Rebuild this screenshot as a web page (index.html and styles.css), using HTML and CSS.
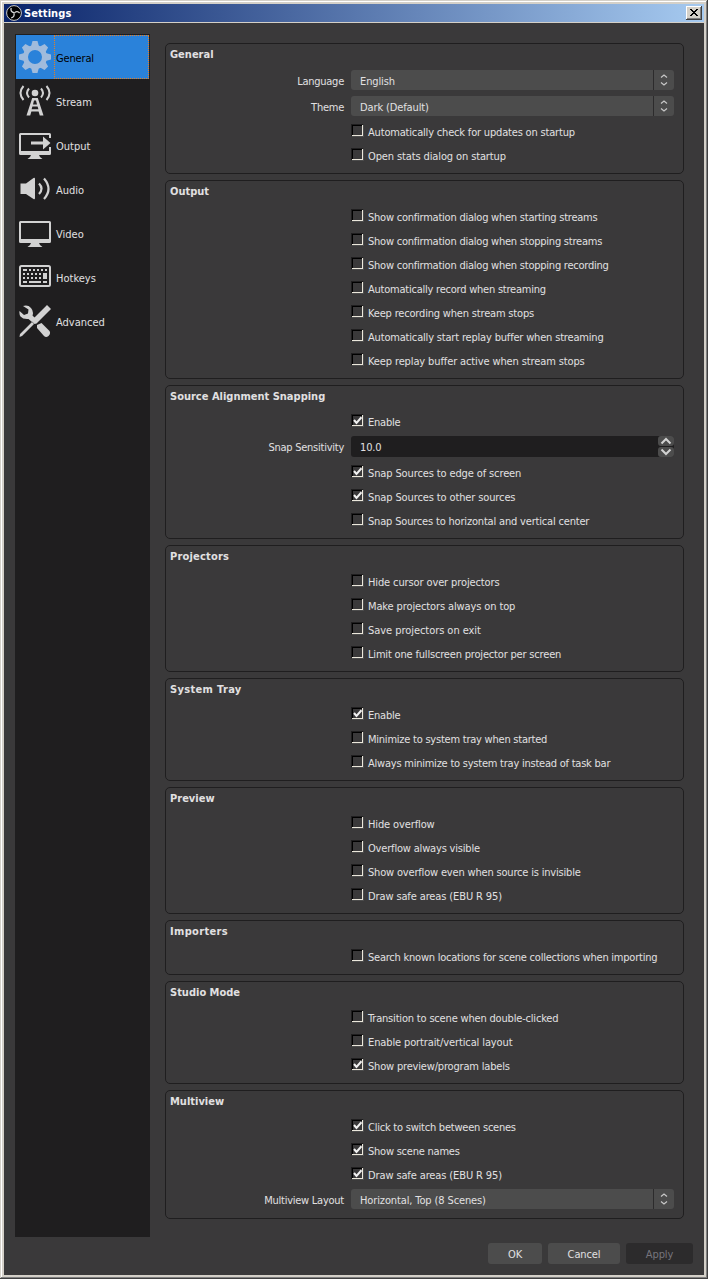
FILE: index.html
```html
<!DOCTYPE html>
<html lang="en">
<head>
<meta charset="utf-8">
<title>Settings</title>
<link rel="stylesheet" href="styles.css">
</head>
<body>
<div class="window">
  <header class="titlebar">
    <svg class="logo" viewBox="0 0 16 16"><circle cx="8" cy="8" r="7.400" fill="#000" stroke="#c8c8c8"/><g fill="none" stroke="#d8d8d8" stroke-width="1.300"><path d="M8 7.600C5.600 7.400 4.400 5.400 5.200 3"/><path d="M8.300 8.200C9.700 6.200 12 6.100 13.600 8"/><path d="M7.800 8.300C8.800 10.500 7.600 12.500 5.200 12.900"/></g></svg>
    <span class="title">Settings</span>
    <button class="close" aria-label="Close"><svg viewBox="0 0 8 7" shape-rendering="crispEdges"><path d="M0 0h2v1h1v1h2V1h1V0h2v1H7v1H6v1H5v1h1v1h1v1h1v1H6V6H5V5H3v1H2v1H0V6h1V5h1V4h1V3H2V2H1V1H0z"/></svg></button>
  </header>
  <div class="body">
    <nav class="sidebar">
      <a class="item selected"><span class="ico"><svg viewBox="0 0 32 32"><circle cx="16" cy="16" r="9.500" fill="none" stroke="#a0bbdc" stroke-width="5"/><g fill="#a0bbdc"><path id="tooth" d="M13.500 0h5l1.500 5.500h-8z"/><use href="#tooth" transform="rotate(45 16 16)"/><use href="#tooth" transform="rotate(90 16 16)"/><use href="#tooth" transform="rotate(135 16 16)"/><use href="#tooth" transform="rotate(180 16 16)"/><use href="#tooth" transform="rotate(225 16 16)"/><use href="#tooth" transform="rotate(270 16 16)"/><use href="#tooth" transform="rotate(315 16 16)"/></g></svg></span><span class="name">General</span></a>
      <a class="item"><span class="ico"><svg viewBox="0 0 32 32"><circle cx="16" cy="8" r="3.300"/><g fill="none" stroke="#d2d2d2" stroke-width="2"><path d="M10 3.500q-4 4.500 0 9M22 3.500q4 4.500 0 9"/><path d="M4.500 1q-6 7 0 14M27.500 1q6 7 0 14"/></g><path fill-rule="evenodd" d="M13.200 13h5.600l5.700 17.500h-3.700l-1.200-4h-7.200l-1.200 4H7.500zM15 15.500l-1 4h4l-1-4zM13.400 21.500l-.8 2.700h6.800l-.8-2.700z"/></svg></span><span class="name">Stream</span></a>
      <a class="item"><span class="ico low"><svg viewBox="0 0 32 32"><path fill-rule="evenodd" d="M1.500 3h29Q32 3 32 4.500V8h-2V5H2v16h28v-4h2v6.500q0 1.500-1.500 1.500H20q.5 2.500 3.500 4h-15q3-1.500 3.500-4H1.500Q0 25 0 23.500v-19Q0 3 1.500 3z"/><path d="M12 11.500h12V6.500l7.500 6.500-7.500 6.500v-5H12z"/></svg></span><span class="name">Output</span></a>
      <a class="item"><span class="ico"><svg viewBox="0 0 32 32"><path d="M1.500 10.500H7L14.500 5Q16 4.300 16 6v19q0 1.700-1.500 1L7 21H1.500z"/><path fill="none" stroke="#d2d2d2" stroke-width="2.200" d="M20 10.500q5 5 0 10.500M25 5.500q9 10.500 0 20.500"/></svg></span><span class="name">Audio</span></a>
      <a class="item"><span class="ico low"><svg viewBox="0 0 32 32"><path fill-rule="evenodd" d="M1.500 3h29Q32 3 32 4.500v19q0 1.500-1.500 1.500H20q.5 2.500 3.500 4h-15q3-1.500 3.500-4H1.500Q0 25 0 23.500v-19Q0 3 1.500 3zM2 5v16h28V5z"/></svg></span><span class="name">Video</span></a>
      <a class="item"><span class="ico low"><svg viewBox="0 0 32 32"><rect x="1" y="4" width="30" height="20" rx="1.500" fill="none" stroke="#d2d2d2" stroke-width="2"/><path d="M4 7h4v2H4zM10 7h2v2h-2zM14 7h2v2h-2zM18 7h2v2h-2zM22 7h2v2h-2zM26 7h2v2h-2zM4 11h2v2H4zM8 11h2v2H8zM12 11h2v2h-2zM16 11h2v2h-2zM20 11h2v2h-2zM24 11h4v6h-4zM4 15h2v2H4zM8 15h2v2H8zM12 15h2v2h-2zM16 15h2v2h-2zM20 15h2v2h-2zM4 19h4v2H4zM10 19h12v2H10zM24 19h4v2h-4z"/></svg></span><span class="name">Hotkeys</span></a>
      <a class="item"><span class="ico"><svg viewBox="0 0 32 32"><path d="M4 1Q9-.5 12 3t1.500 7.500l3 3L13 17l-3.500-3Q4 14.500 1.500 11.500 0 9 .5 6l4.500 4 4-1.500.5-4zM18 20l4.500-2 8 8q1.500 3-1 5-2.500 2-4.500 0l-7-8zM13.500 14.500L28 0l4 4-14.500 14.500-2 .5-2-2zM13 17l2 2L3 31l-2.500 1L1 29z"/></svg></span><span class="name">Advanced</span></a>
    </nav>
    <main class="groups">
      <section class="group"><h2>General</h2>
        <div class="row field"><label>Language</label><div class="combo"><span>English</span><i><svg viewBox="0 0 8 12"><path d="M1 3.500L4 1l3 2.500M1 8.500L4 11l3-2.500"/></svg></i></div></div>
        <div class="row field"><label>Theme</label><div class="combo"><span>Dark (Default)</span><i><svg viewBox="0 0 8 12"><path d="M1 3.500L4 1l3 2.500M1 8.500L4 11l3-2.500"/></svg></i></div></div>
        <div class="row snug"><b class="box"></b><span>Automatically check for updates on startup</span></div>
        <div class="row"><b class="box"></b><span>Open stats dialog on startup</span></div>
      </section>
      <section class="group"><h2>Output</h2>
        <div class="row tight"><b class="box"></b><span>Show confirmation dialog when starting streams</span></div>
        <div class="row tight"><b class="box"></b><span>Show confirmation dialog when stopping streams</span></div>
        <div class="row tight"><b class="box"></b><span>Show confirmation dialog when stopping recording</span></div>
        <div class="row tight"><b class="box"></b><span>Automatically record when streaming</span></div>
        <div class="row snug"><b class="box"></b><span>Keep recording when stream stops</span></div>
        <div class="row snug"><b class="box"></b><span>Automatically start replay buffer when streaming</span></div>
        <div class="row"><b class="box"></b><span>Keep replay buffer active when stream stops</span></div>
      </section>
      <section class="group"><h2>Source Alignment Snapping</h2>
        <div class="row tight"><b class="box"><svg viewBox="0 0 9 9"><path d="M1 4l2.500 3L8.500 1.200"/></svg></b><span>Enable</span></div>
        <div class="row field spinrow"><label>Snap Sensitivity</label><div class="spin"><span>10.0</span><div class="arrows"><i><svg viewBox="0 0 12 8"><path d="M1.500 6.500L6 2l4.500 4.500"/></svg></i><i><svg viewBox="0 0 12 8"><path d="M1.500 1.500L6 6l4.500-4.500"/></svg></i></div></div></div>
        <div class="row"><b class="box"><svg viewBox="0 0 9 9"><path d="M1 4l2.500 3L8.500 1.200"/></svg></b><span>Snap Sources to edge of screen</span></div>
        <div class="row"><b class="box"><svg viewBox="0 0 9 9"><path d="M1 4l2.500 3L8.500 1.200"/></svg></b><span>Snap Sources to other sources</span></div>
        <div class="row snug"><b class="box"></b><span>Snap Sources to horizontal and vertical center</span></div>
      </section>
      <section class="group"><h2 class="wide">Projectors</h2>
        <div class="row"><b class="box"></b><span>Hide cursor over projectors</span></div>
        <div class="row"><b class="box"></b><span>Make projectors always on top</span></div>
        <div class="row loose"><b class="box"></b><span>Save projectors on exit</span></div>
        <div class="row snug"><b class="box"></b><span>Limit one fullscreen projector per screen</span></div>
      </section>
      <section class="group"><h2 class="wider">System Tray</h2>
        <div class="row tight"><b class="box"><svg viewBox="0 0 9 9"><path d="M1 4l2.500 3L8.500 1.200"/></svg></b><span>Enable</span></div>
        <div class="row tight"><b class="box"></b><span>Minimize to system tray when started</span></div>
        <div class="row tight"><b class="box"></b><span>Always minimize to system tray instead of task bar</span></div>
      </section>
      <section class="group"><h2>Preview</h2>
        <div class="row"><b class="box"></b><span>Hide overflow</span></div>
        <div class="row snug"><b class="box"></b><span>Overflow always visible</span></div>
        <div class="row snug"><b class="box"></b><span>Show overflow even when source is invisible</span></div>
        <div class="row"><b class="box"></b><span>Draw safe areas (EBU R 95)</span></div>
      </section>
      <section class="group"><h2 class="wider">Importers</h2>
        <div class="row tight"><b class="box"></b><span>Search known locations for scene collections when importing</span></div>
      </section>
      <section class="group"><h2>Studio Mode</h2>
        <div class="row snug"><b class="box"></b><span>Transition to scene when double-clicked</span></div>
        <div class="row"><b class="box"></b><span>Enable portrait/vertical layout</span></div>
        <div class="row snug"><b class="box"><svg viewBox="0 0 9 9"><path d="M1 4l2.500 3L8.500 1.200"/></svg></b><span>Show preview/program labels</span></div>
      </section>
      <section class="group"><h2>Multiview</h2>
        <div class="row tight"><b class="box"><svg viewBox="0 0 9 9"><path d="M1 4l2.500 3L8.500 1.200"/></svg></b><span>Click to switch between scenes</span></div>
        <div class="row tight"><b class="box"><svg viewBox="0 0 9 9"><path d="M1 4l2.500 3L8.500 1.200"/></svg></b><span>Show scene names</span></div>
        <div class="row"><b class="box"><svg viewBox="0 0 9 9"><path d="M1 4l2.500 3L8.500 1.200"/></svg></b><span>Draw safe areas (EBU R 95)</span></div>
        <div class="row field"><label>Multiview Layout</label><div class="combo"><span>Horizontal, Top (8 Scenes)</span><i><svg viewBox="0 0 8 12"><path d="M1 3.500L4 1l3 2.500M1 8.500L4 11l3-2.500"/></svg></i></div></div>
      </section>
    </main>
  </div>
  <footer class="actions"><button class="btn ok">OK</button><button class="btn cancel">Cancel</button><button class="btn apply" disabled>Apply</button></footer>
</div>
</body>
</html>
```

FILE: styles.css
```css
* { box-sizing: border-box; }
body { margin: 0; background: #404040; font: 11px/14px "DejaVu Sans Condensed", "DejaVu Sans", sans-serif; font-stretch: condensed; color: #e1e0e1; }
button { font: inherit; color: inherit; border: 0; padding: 0; }
svg { display: block; }
.window { width: 708px; height: 1279px; background: #3a393a; padding: 4px; display: flex; flex-direction: column;
  box-shadow: inset -1px -1px #404040, inset 1px 1px #d4d0c8, inset -2px -2px #808080, inset 2px 2px #fff, inset 0 0 0 4px #d4d0c8; }
.titlebar { flex: none; height: 19px; border-bottom: 1px solid #d4d0c8; background: linear-gradient(90deg, #0a246a, #a6caf0); display: flex; align-items: center; padding: 0 2px; }
.logo { width: 16px; height: 16px; }
.title { flex: 1; margin-left: 2px; padding-top: 1px; color: #fff; font-weight: bold; letter-spacing: .08px; }
.close { width: 16px; height: 14px; background: #d4d0c8; display: flex; align-items: center; justify-content: center; padding: 0 1px 1px 0; box-shadow: inset -1px -1px #404040, inset 1px 1px #fff, inset -2px -2px #808080; }
.close svg { width: 8px; height: 7px; }
.body { flex: none; display: flex; padding: 11px 20px 0 11px; height: 1214px; }
.sidebar { width: 135px; height: 1203px; background: #1f1e1f; padding: 1px; }
.item { height: 44px; display: flex; }
.ico { width: 38px; padding: 6px 0 0 3px; }
.ico.low { padding-top: 7px; }
.ico svg { width: 32px; height: 32px; fill: #d2d2d2; }
.name { flex: 1; line-height: 48px; padding-left: 2px; }
.selected { background: #2a82da; color: #000; }
.selected .name { border: 1px dotted #e58025; line-height: 46px; padding-left: 1px; letter-spacing: -.15px; }
.groups { margin: 9px 0 0 15px; width: 519px; display: flex; flex-direction: column; gap: 6px; }
.group { border: 1px solid #1f1e1f; border-radius: 5px; padding-bottom: 5px; }
h2 { margin: 0; height: 24px; padding: 4px 0 0 4px; font-size: 11px; line-height: 14px; font-weight: bold; }
h2.wide { letter-spacing: .2px; }
h2.wider { letter-spacing: .34px; }
.row { height: 24px; display: flex; padding: 4px 9px 0 185px; gap: 4px; letter-spacing: -.12px; }
.row.loose { letter-spacing: -.05px; }
.row.snug { letter-spacing: -.18px; }
.row.tight { letter-spacing: -.23px; }
.row > span { line-height: 18px; }
.box { flex: none; width: 13px; height: 13px; border: 1px solid; border-color: #1f1e1f #4c4c4c #4c4c4c #1f1e1f; box-shadow: inset -1px -1px #ece8dc, inset 1px 1px #000; padding: 1px; }
.box svg { width: 9px; height: 9px; fill: none; stroke: #f0f0f0; stroke-width: 2; }
.row.field { height: 26px; padding: 2px 9px 0 0; gap: 7px; }
.field label { width: 178px; text-align: right; line-height: 23px; letter-spacing: -.25px; }
.combo { flex: 1; height: 20px; background: #4c4c4c; border-radius: 3px; display: flex; }
.combo span { flex: 1; padding-left: 9px; line-height: 23px; }
.combo i { width: 21px; border-left: 1px solid #2c2b2c; display: flex; align-items: center; justify-content: center; }
.combo svg { width: 8px; height: 12px; fill: none; stroke: #c8c8c8; stroke-width: 1.2; }
.row.spinrow { height: 27px; }
.spin { flex: 1; height: 21px; background: #1f1e1f; border-radius: 3px; display: flex; }
.spin span { flex: 1; padding-left: 9px; line-height: 23px; }
.arrows { width: 16px; display: flex; flex-direction: column; gap: 1px; }
.arrows i { flex: 1; background: #4c4c4c; border-radius: 3px; display: flex; justify-content: center; align-items: center; }
.arrows svg { width: 12px; height: 8px; fill: none; stroke: #d2d2d2; stroke-width: 2; }
.actions { display: flex; justify-content: flex-end; gap: 6px; padding: 6px 11px 0 0; }
.btn { height: 21px; background: #4c4c4c; border-radius: 3px; line-height: 23px; letter-spacing: -.12px; }
.ok { width: 54px; }
.cancel { width: 72px; }
.apply { width: 67px; background: #2c2b2c; color: #76757c; }
```
